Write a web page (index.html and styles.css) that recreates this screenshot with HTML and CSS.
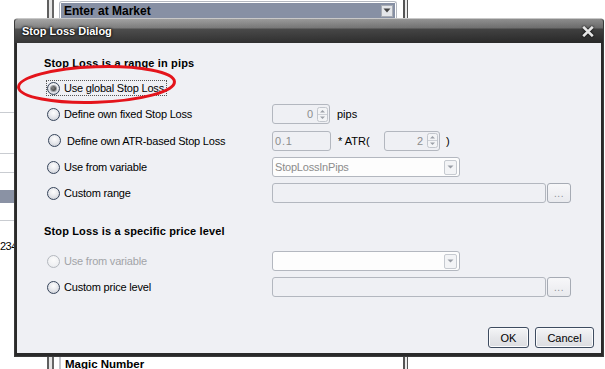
FILE: index.html
```html
<!DOCTYPE html>
<html>
<head>
<meta charset="utf-8">
<link rel="stylesheet" href="styles.css">
</head>
<body>
<div class="desk">
  <div class="side">
    <div class="hline l1"></div>
    <div class="hline l2"></div>
    <div class="hline l3"></div>
    <div class="band"></div>
    <div class="hline l4"></div>
    <div class="side-num">234</div>
  </div>
  <div class="rule"></div>
  <div class="main">
    <div class="field-top">
      <div class="field-top-inner">
        <span>Enter at Market</span>
        <span class="mini-drop"><svg width="8" height="5" viewBox="0 0 8 5"><path d="M0.5 0.5 L7.5 0.5 L4 4.5Z" fill="#444"/></svg></span>
      </div>
    </div>
    <div class="field-bottom">Magic Number</div>
  </div>
  <div class="rule2"></div>
</div>

<div class="dialog">
  <div class="titlebar">
    <span class="title">Stop Loss Dialog</span>
    <svg class="close" width="12" height="11" viewBox="0 0 12 11"><path d="M1.2 0.8 L10.8 10.2 M10.8 0.8 L1.2 10.2" stroke="#e6e6e6" stroke-width="2.6"/></svg>
  </div>
  <div class="content">
    <div class="section-title">Stop Loss is a range in pips</div>

    <div class="opt-row">
      <div class="opt"><span class="opt-box focused"><span class="radio checked"></span><span>Use global Stop Loss</span></span></div>
    </div>

    <div class="opt-row">
      <div class="opt"><span class="opt-box"><span class="radio"></span><span>Define own fixed Stop Loss</span></span></div>
      <div class="spin w58"><span class="val">0</span><svg class="spinner" width="11" height="15" viewBox="0 0 11 15"><rect x="0.5" y="0.5" width="10" height="14" rx="2" fill="#f3f4f6" stroke="#c2c6cd"/><line x1="1" y1="7.5" x2="10" y2="7.5" stroke="#cdd0d6"/><path d="M3 5.5 L5.5 3 L8 5.5Z" fill="#9ca0a8"/><path d="M3 9.5 L5.5 12 L8 9.5Z" fill="#9ca0a8"/></svg></div>
      <span class="after-label">pips</span>
    </div>

    <div class="opt-row tall">
      <div class="opt"><span class="opt-box shifted"><span class="radio"></span><span class="pad-text">Define own ATR-based Stop Loss</span></span></div>
      <div class="text-input w59 mono">0.1</div>
      <span class="atr-label">* ATR(</span>
      <div class="spin w56"><span class="val">2</span><svg class="spinner" width="11" height="15" viewBox="0 0 11 15"><rect x="0.5" y="0.5" width="10" height="14" rx="2" fill="#f3f4f6" stroke="#c2c6cd"/><line x1="1" y1="7.5" x2="10" y2="7.5" stroke="#cdd0d6"/><path d="M3 5.5 L5.5 3 L8 5.5Z" fill="#9ca0a8"/><path d="M3 9.5 L5.5 12 L8 9.5Z" fill="#9ca0a8"/></svg></div>
      <span class="paren">)</span>
    </div>

    <div class="opt-row">
      <div class="opt"><span class="opt-box"><span class="radio"></span><span>Use from variable</span></span></div>
      <div class="combo"><span class="combo-text">StopLossInPips</span><span class="drop-btn"><svg width="7" height="4" viewBox="0 0 7 4"><path d="M0.5 0.5 L6.5 0.5 L3.5 3.5Z" fill="#9a9ea6"/></svg></span></div>
    </div>

    <div class="opt-row">
      <div class="opt"><span class="opt-box"><span class="radio"></span><span>Custom range</span></span></div>
      <div class="text-input wide"></div>
      <div class="dots-btn">...</div>
    </div>

    <div class="section-title second">Stop Loss is a specific price level</div>

    <div class="opt-row first-low">
      <div class="opt"><span class="opt-box disabled"><span class="radio"></span><span>Use from variable</span></span></div>
      <div class="combo"><span class="combo-text"></span><span class="drop-btn"><svg width="7" height="4" viewBox="0 0 7 4"><path d="M0.5 0.5 L6.5 0.5 L3.5 3.5Z" fill="#9a9ea6"/></svg></span></div>
    </div>

    <div class="opt-row">
      <div class="opt"><span class="opt-box"><span class="radio"></span><span>Custom price level</span></span></div>
      <div class="text-input wide"></div>
      <div class="dots-btn">...</div>
    </div>

    <div class="footer">
      <button class="btn ok">OK</button>
      <button class="btn cancel">Cancel</button>
    </div>
  </div>
</div>

<svg class="highlight" width="605" height="369" viewBox="0 0 605 369">
  <ellipse cx="96.5" cy="84.5" rx="78" ry="17.8" transform="rotate(-2 96.5 84.5)" fill="none" stroke="#e4141b" stroke-width="3"/>
</svg>
</body>
</html>
```

FILE: styles.css
```css
* { box-sizing: border-box; }
html, body { margin: 0; padding: 0; }
body {
  width: 605px;
  height: 369px;
  overflow: hidden;
  background: #fff;
  position: relative;
  font-family: "Liberation Sans", Arial, sans-serif;
  font-size: 11px;
  color: #000;
}

/* background window */
.desk { display: flex; height: 369px; }
.side { width: 46px; display: flex; flex-direction: column; flex: none; }
.hline { height: 1px; background: #c9ccd1; }
.hline.l1 { margin-top: 112px; }
.hline.l2 { margin-top: 40px; }
.hline.l3 { margin-top: 18px; }
.band { margin-top: 17px; height: 13px; background: #8a92a4; }
.hline.l4 { margin-top: 17px; }
.side-num { margin-top: 18px; line-height: 14px; font-size: 11px; letter-spacing: -0.5px; }

.rule {
  width: 7px; flex: none; margin-left: 1px;
  border-left: 2px solid #5f5f5f; border-right: 2px solid #666;
  background: #e6e6e6;
}
.main {
  width: 349px; flex: none;
  display: flex; flex-direction: column; justify-content: space-between;
  padding-left: 5px;
}
.field-top {
  margin-top: 1px; width: 338px; height: 19px;
  border: 1px solid #b4b8c0; border-bottom: none;
  border-radius: 3px 3px 0 0;
  padding: 1px 1px 0;
}
.field-top-inner {
  height: 15px; background: #8790a4;
  display: flex; align-items: center; justify-content: space-between;
  font-weight: bold; font-size: 12px; padding-left: 3px;
}
.mini-drop {
  width: 12px; height: 12px; margin-right: 2px;
  background: #e4e6ea; border: 1px solid #a8acb4;
  display: flex; align-items: center; justify-content: center;
}
.field-bottom {
  height: 12px;
  border-left: 2px solid #c4c7cc;
  padding-left: 4px;
  font-weight: bold; font-size: 11.5px; line-height: 14px;
}
.rule2 {
  width: 5px; flex: none;
  border-left: 2px solid #555; border-right: 1px solid #555;
  background: #eaeaea;
}

/* dialog */
.dialog {
  position: absolute; left: 14px; top: 18px;
  width: 590px; height: 339px;
  display: flex; flex-direction: column;
  border: 1px solid #3a3a3a; border-top-color: #c8c8c8;
  border-radius: 4px 4px 0 0;
  background: #2a2a2a;
  padding: 0 2px 3px;
}
.titlebar {
  height: 24px; margin: 0 -2px;
  display: flex; align-items: center; justify-content: space-between;
  padding: 0 9px 0 7px;
  background:
    linear-gradient(to right, rgba(255,255,255,0.04), rgba(0,0,0,0.15)),
    linear-gradient(to bottom, #a3a3a3 0, #7c7c7c 9px, #4a4a4a 10px, #2e2e2e 100%);
  border-radius: 3px 3px 0 0;
}
.title {
  color: #fff; font-weight: bold; font-size: 11px;
  text-shadow: 0 0 3px #000, 0 0 2px #000;
}
.close { display: block; filter: drop-shadow(0 0 1px #000); }

.content {
  flex: 1;
  background: #eff0f4;
  display: flex; flex-direction: column;
  padding: 12px 7px 5px 27px;
}
.section-title {
  font-weight: bold; line-height: 16px; letter-spacing: 0.15px;
  margin-bottom: 4px;
}
.section-title.second { margin-top: 17px; margin-bottom: 0; }

.opt-row { display: flex; align-items: center; height: 26px; margin-left: 2px; }
.opt-row.tall { height: 27px; }
.opt-row.first-low { margin-top: 9px; }
.opt { flex: 0 0 226px; display: flex; align-items: center; }
.opt-box {
  display: inline-flex; align-items: center; height: 16px;
  border: 1px dotted transparent; padding-right: 2px;
  letter-spacing: -0.2px;
}
.opt-box.focused { border-color: #555; }
.opt-box.shifted .radio { margin-left: 1px; }
.pad-text { padding-left: 2px; }

.radio {
  width: 13px; height: 13px; flex: none; margin-right: 4px;
  border-radius: 50%; border: 1px solid #36445a;
  background: radial-gradient(circle at 50% 35%, #fdfdfd 0, #e9eaee 45%, #c4c8d0 100%);
  position: relative;
}
.radio.checked::after {
  content: ""; position: absolute; left: 3px; top: 3px;
  width: 5px; height: 5px; border-radius: 50%;
  background: radial-gradient(circle at 40% 40%, #888, #262626);
  box-shadow: 0 0 0 1px #9a9da4;
}
.opt-box.disabled { color: #a2a4a8; }
.opt-box.disabled .radio {
  border-color: #b4b8be;
  background: radial-gradient(circle at 50% 35%, #fbfbfb 0, #f0f1f3 60%, #e2e4e8 100%);
}

.spin, .text-input, .combo {
  height: 20px; border: 1px solid #b3b7bf; border-radius: 3px;
  background: #eff0f4; color: #8c8c8c;
  display: flex; align-items: center; flex: none;
}
.spin { justify-content: flex-end; padding-right: 1px; }
.spin .val { margin-right: 4px; }
.spinner { display: block; }
.w58 { width: 58px; }
.w56 { width: 56px; }
.w59 { width: 59px; }
.mono { padding-left: 2px; letter-spacing: 0.8px; }
.after-label { margin-left: 7px; }
.atr-label { width: 46px; margin-left: 7px; flex: none; }
.paren { margin-left: 6px; }

.combo {
  width: 188px; background: #fdfdfd;
  justify-content: space-between; padding: 0 2px 0 2px;
}
.combo-text { letter-spacing: -0.2px; }
.drop-btn {
  width: 13px; height: 15px;
  border: 1px solid #c6cad0; border-radius: 2px;
  background: #f3f4f6;
  display: flex; align-items: center; justify-content: center;
}
.text-input.wide { width: 274px; }
.dots-btn {
  width: 24px; height: 20px; margin-left: 1px; flex: none;
  border: 1px solid #a6abb4; border-radius: 3px;
  background: linear-gradient(#f7f7f9, #e9eaee);
  color: #8c8f96; font-size: 10px;
  display: flex; align-items: center; justify-content: center;
  letter-spacing: 0.5px;
}

.footer {
  margin-top: auto;
  display: flex; justify-content: flex-end; gap: 6px;
}
.btn {
  height: 21px; padding: 0;
  font-family: "Liberation Sans", Arial, sans-serif; font-size: 11px; color: #000;
  border: 1px solid #3e4c60; border-radius: 3px;
  background: linear-gradient(#f4f5f7, #e6e7ea 50%, #dcdde1);
  box-shadow: inset 0 0 0 1px #fbfbfc;
}
.btn.ok { width: 41px; }
.btn.cancel { width: 59px; }

.highlight { position: absolute; left: 0; top: 0; pointer-events: none; }
```
